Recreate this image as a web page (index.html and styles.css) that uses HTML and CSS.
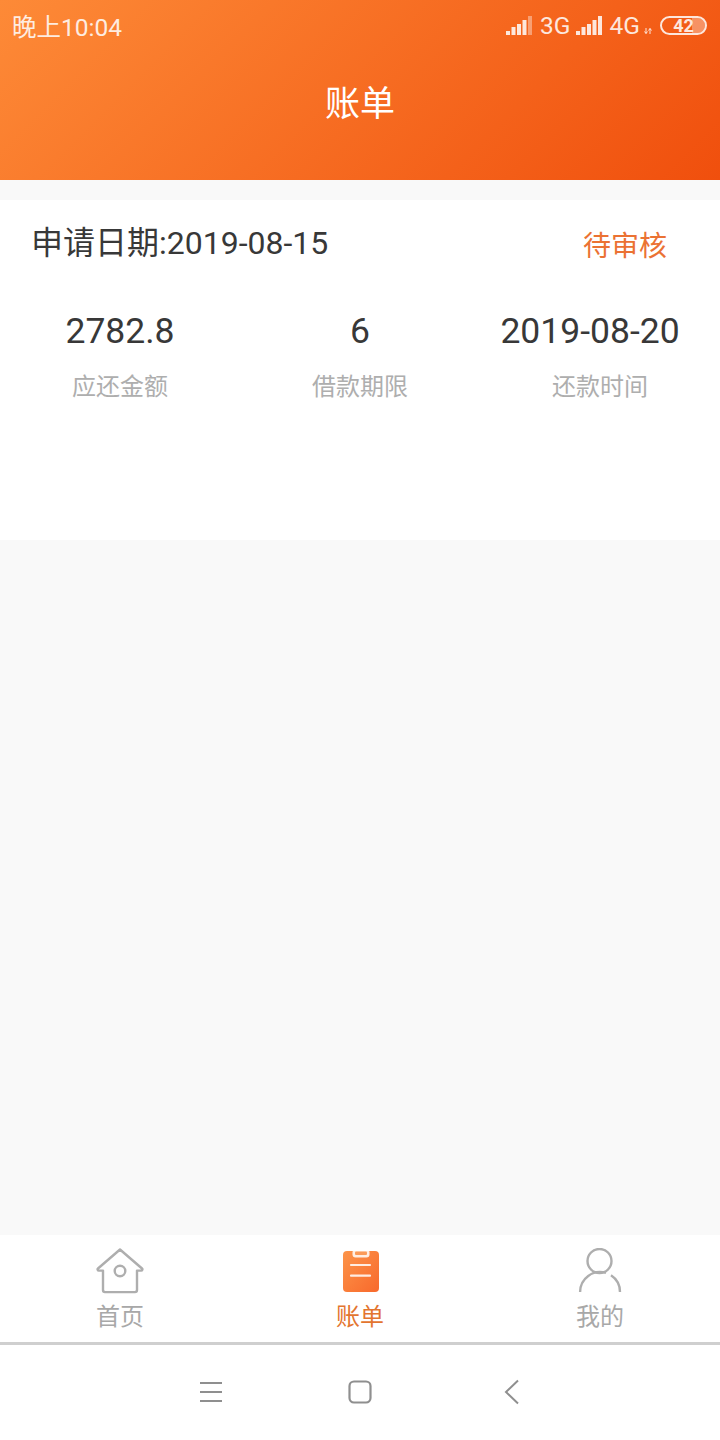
FILE: index.html
```html
<!DOCTYPE html>
<html lang="zh">
<head>
    <meta charset="UTF-8">
    <meta name="viewport" content="width=device-width, initial-scale=1.0">
    <title>账单</title>
    <link rel="stylesheet" href="styles.css">
</head>
<body>
    <div class="app">
        <div class="top-header">
            <div class="status-bar">
                <span class="status-time">晚上10:04</span>
                <div class="status-icons">
                    <svg class="signal" width="27" height="19" viewBox="0 0 27 19"><g fill="#fff"><rect x="0" y="15" width="4" height="4"/><rect x="5.500" y="11" width="4" height="8"/><rect x="11" y="8" width="4" height="11"/><rect x="16.500" y="4" width="4" height="15"/><rect x="22" y="0" width="4" height="19" opacity=".45"/></g></svg>
                    <span class="net-label">3G</span>
                    <svg class="signal" width="27" height="19" viewBox="0 0 27 19"><g fill="#fff"><rect x="0" y="15" width="4" height="4"/><rect x="5.500" y="11" width="4" height="8"/><rect x="11" y="8" width="4" height="11"/><rect x="16.500" y="4" width="4" height="15"/><rect x="22" y="0" width="4" height="19"/></g></svg>
                    <span class="net-label">4G</span>
                    <svg class="arrows" width="8" height="6" viewBox="0 0 8 6"><path d="M2 0v5.500M.5 3.500L2 5.500l1.500-2M6 6V.5M4.500 2.500L6 .5l1.500 2" fill="none" stroke="#fff" stroke-width="1"/></svg>
                    <div class="battery">
                        <div class="battery-fill"></div>
                        <span class="battery-num">42</span>
                    </div>
                </div>
            </div>
            <div class="page-title">账单</div>
        </div>

        <div class="bill-card">
            <div class="bill-top">
                <span class="apply-date">申请日期:2019-08-15</span>
                <span class="bill-status">待审核</span>
            </div>
            <div class="bill-stats">
                <div class="stat">
                    <div class="stat-value">2782.8</div>
                    <div class="stat-label">应还金额</div>
                </div>
                <div class="stat">
                    <div class="stat-value">6</div>
                    <div class="stat-label">借款期限</div>
                </div>
                <div class="stat">
                    <div class="stat-value stat-value-date">2019-08-20</div>
                    <div class="stat-label">还款时间</div>
                </div>
            </div>
        </div>

        <div class="spacer"></div>

        <div class="tab-bar">
            <div class="tab">
                <svg width="48" height="46" viewBox="0 0 48 46"><g fill="none" stroke="#aeaeae" stroke-width="2.400" stroke-linejoin="round" stroke-linecap="round"><path d="M24 1.500L2 20.500a1.200 1.200 0 0 0 .8 2.100H7v19.500a2 2 0 0 0 2 2h30a2 2 0 0 0 2-2V22.600h4.200a1.200 1.200 0 0 0 .8-2.100z"/><circle cx="24" cy="23" r="5.300"/></g></svg>
                <span class="tab-text">首页</span>
            </div>
            <div class="tab tab-active">
                <svg width="48" height="46" viewBox="0 0 48 46"><defs><linearGradient id="clip" x1="0" y1="0" x2="1" y2="1"><stop offset="0" stop-color="#fc9449"/><stop offset="1" stop-color="#f8692c"/></linearGradient></defs><rect x="7" y="3" width="36" height="41" rx="4" fill="url(#clip)"/><rect x="16.500" y="1.500" width="17" height="8" rx="3" fill="#fff" opacity=".85"/><rect x="19" y="3.500" width="12" height="3.500" rx="1" fill="#fb9a58"/><path d="M15 17h19M15 27.700h19" stroke="#fff" stroke-width="2.200" stroke-linecap="round" opacity=".85"/></svg>
                <span class="tab-text">账单</span>
            </div>
            <div class="tab">
                <svg width="48" height="46" viewBox="0 0 48 46"><g fill="none" stroke="#aeaeae" stroke-width="2.400"><circle cx="23.500" cy="13" r="12"/><path d="M4.100 44A20 20 0 0 1 30 24.900"/><path d="M35 27.300A20 20 0 0 1 44 44"/></g></svg>
                <span class="tab-text">我的</span>
            </div>
        </div>

        <div class="nav-bar">
            <div class="nav-slot"><svg class="nav-menu" width="24" height="22" viewBox="0 0 24 22"><path d="M1 2h22M1 11h22M1 20h22" stroke="#8f8f8f" stroke-width="2"/></svg></div>
            <div class="nav-slot"><svg width="24" height="24" viewBox="0 0 24 24"><rect x="1.500" y="1.500" width="21" height="21" rx="4.500" fill="none" stroke="#8f8f8f" stroke-width="2.200"/></svg></div>
            <div class="nav-slot"><svg class="nav-back" width="16" height="26" viewBox="0 0 16 26"><path d="M14 1.500L2 13l12 11.500" fill="none" stroke="#8f8f8f" stroke-width="2"/></svg></div>
        </div>
    </div>
</body>
</html>
```
FILE: styles.css
```css
* {
    box-sizing: border-box;
}

body {
    margin: 0;
    font-family: Roboto, "Noto Sans CJK SC", sans-serif;
    color: #383838;
}

.app {
    width: 720px;
    height: 1440px;
    display: flex;
    flex-direction: column;
    background-color: #f9f9f9;
}

/* header */
.top-header {
    height: 180px;
    background: linear-gradient(135deg, #fd8a37 0%, #f04f0d 100%);
    color: white;
}

.status-bar {
    height: 50px;
    padding: 0 13px 0 12px;
    display: flex;
    justify-content: space-between;
    align-items: center;
    opacity: 0.85;
}

.status-time {
    font-size: 24.500px;
}

.status-icons {
    display: flex;
    align-items: center;
}

.signal {
    margin-left: -1px;
    margin-right: 1px;
}

.net-label {
    font-size: 24.500px;
    margin-left: 6px;
    margin-right: 6px;
}

.arrows {
    margin-top: 11px;
    margin-left: -2px;
    margin-right: 8px;
}

.battery {
    position: relative;
    width: 47px;
    height: 19px;
    border: 2px solid white;
    border-radius: 10px;
    display: flex;
    justify-content: center;
    align-items: center;
    overflow: hidden;
}

.battery-fill {
    position: absolute;
    top: 0;
    bottom: 0;
    right: 0;
    width: 13px;
    background-color: rgba(255, 255, 255, 0.4);
}

.battery-num {
    position: relative;
    font-size: 18px;
    font-weight: bold;
}

.page-title {
    margin-top: 8px;
    text-align: center;
    font-size: 35px;
    line-height: 94px;
    height: 94px;
}

/* bill card */
.bill-card {
    height: 340px;
    margin-top: 20px;
    background-color: white;
}

.bill-top {
    height: 88px;
    padding: 0 53px 0 31px;
    display: flex;
    justify-content: space-between;
    align-items: center;
}

.apply-date {
    font-size: 32px;
    margin-bottom: 8px;
}

.bill-status {
    font-size: 28px;
    color: #eb7233;
}

.bill-stats {
    display: flex;
    padding-top: 19px;
}

.stat {
    flex: 1;
    text-align: center;
}

.stat-value {
    font-size: 35.500px;
    line-height: 48px;
}

.stat-value-date {
    margin-left: -20px;
}

.stat-label {
    margin-top: 15px;
    font-size: 24px;
    line-height: 34px;
    color: #aeaeae;
}

.spacer {
    flex: 1;
}

/* tabs */
.tab-bar {
    height: 110px;
    display: flex;
    background-color: white;
    border-bottom: 3px solid #cfcfcf;
}

.tab {
    flex: 1;
    display: flex;
    flex-direction: column;
    align-items: center;
    padding-top: 13px;
}

.tab-text {
    margin-top: 8px;
    font-size: 24px;
    line-height: 30px;
    color: #a8a8a8;
}

.tab-active .tab-text {
    color: #e3752f;
}

/* system navigation */
.nav-bar {
    height: 95px;
    padding-bottom: 2px;
    background-color: white;
    display: flex;
    justify-content: center;
    align-items: center;
}

.nav-slot {
    width: 150px;
    display: flex;
    justify-content: center;
}

.nav-menu {
    margin-left: 2px;
}

.nav-back {
    margin-left: 4px;
}
```
